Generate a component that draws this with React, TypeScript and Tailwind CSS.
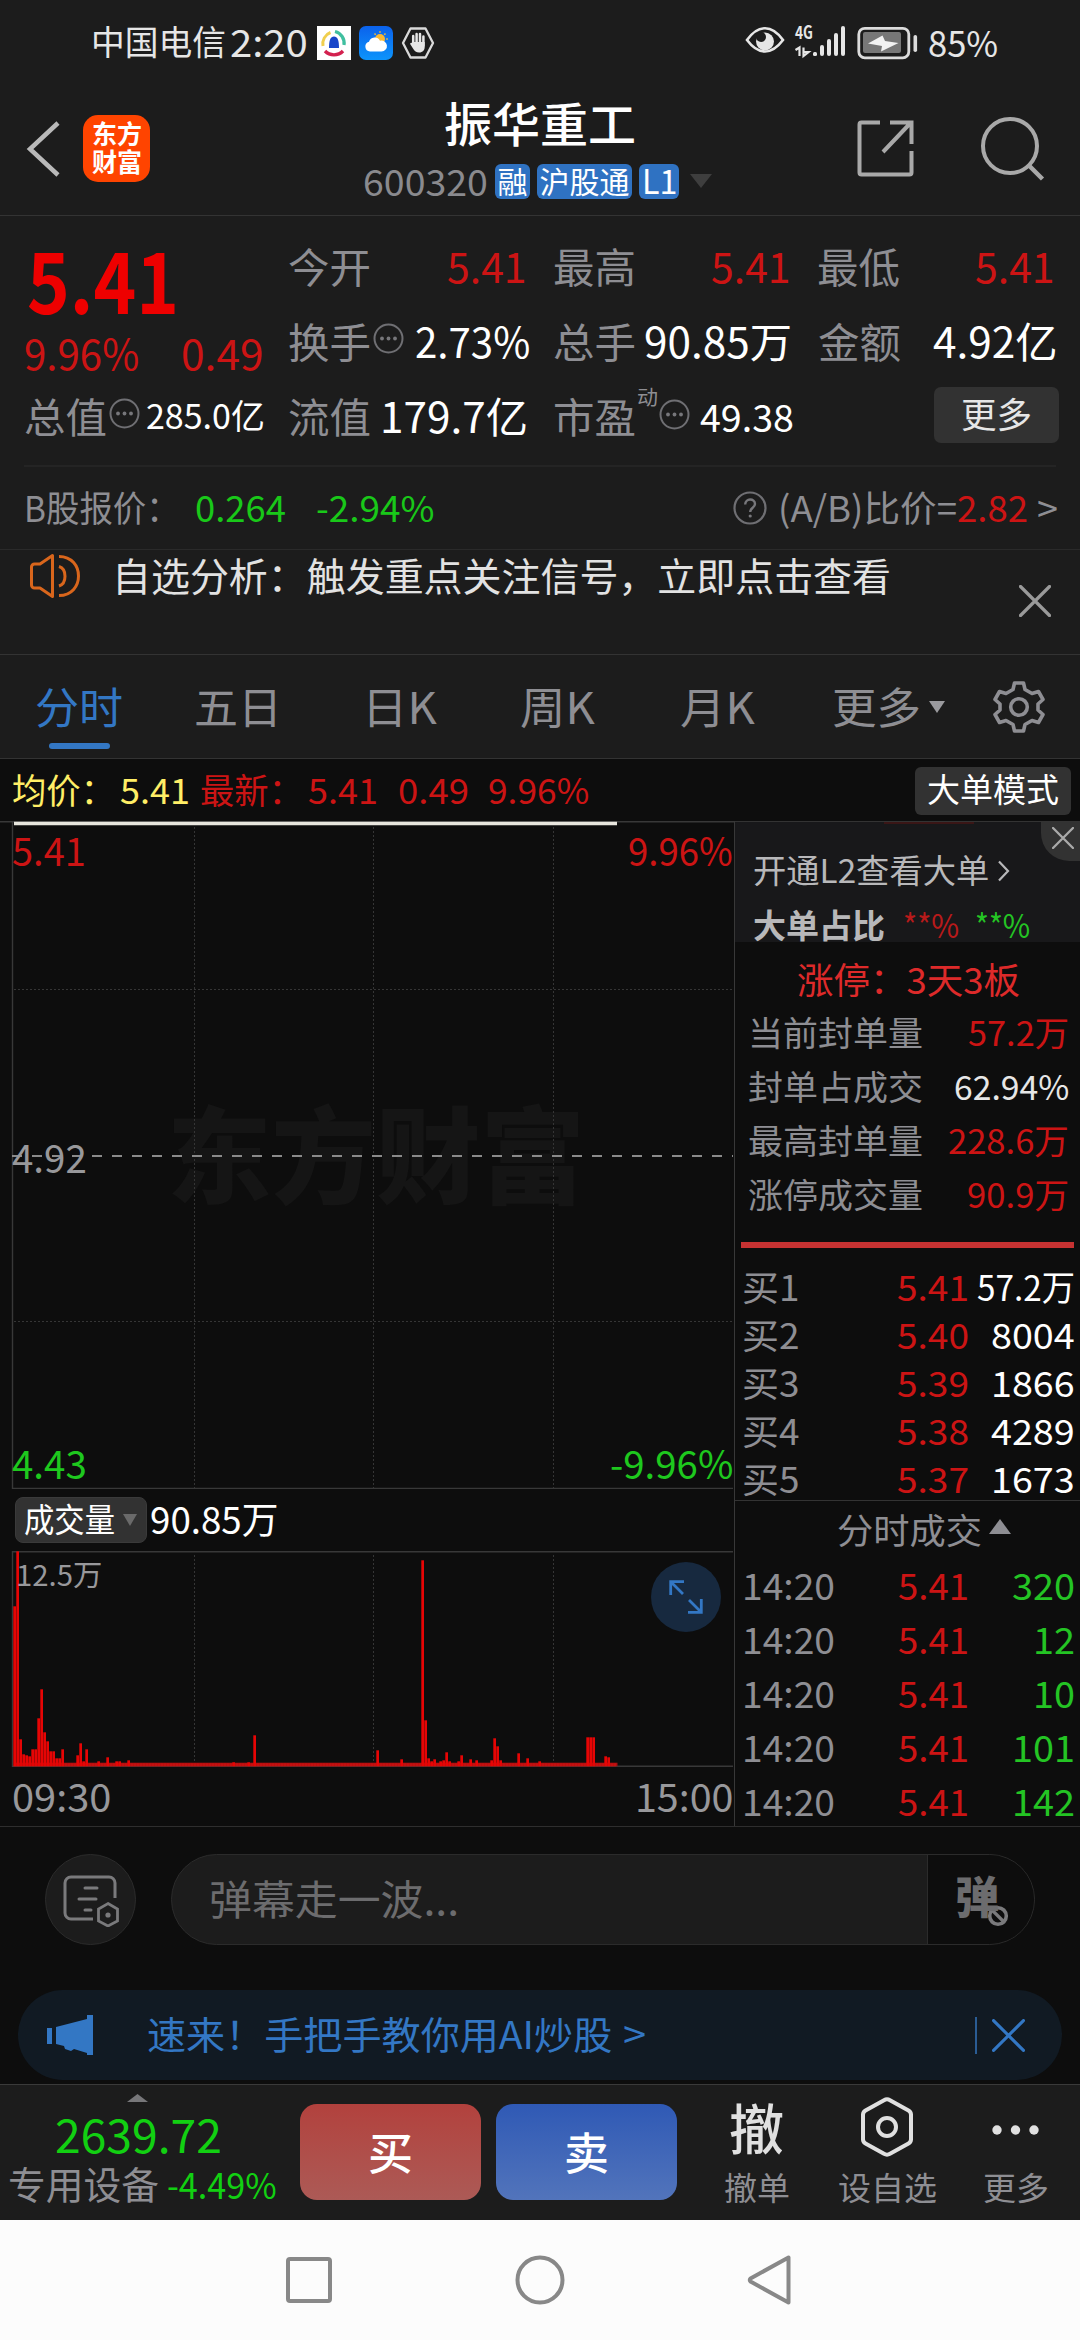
import React, { useLayoutEffect, useRef } from "react";

/* Text that is stretched or condensed to the width of its own box. */
function Fit({ className = "", children }: { className?: string; children: React.ReactNode }) {
  const outer = useRef<HTMLSpanElement>(null);
  const inner = useRef<HTMLSpanElement>(null);
  useLayoutEffect(() => {
    if (outer.current && inner.current) {
      const scale = outer.current.clientWidth / inner.current.offsetWidth;
      inner.current.style.transform = `translateY(-6%) scaleX(${scale})`;
    }
  }, [children]);
  return (
    <span ref={outer} className={`block shrink-0 leading-none ${className}`}>
      <span ref={inner} className="inline-block origin-left whitespace-pre leading-none">
        {children}
      </span>
    </span>
  );
}

const Dots = ({ className = "" }: { className?: string }) => (
  <svg className={`shrink-0 ${className}`} width="31" height="31" viewBox="0 0 31 31" fill="none">
    <circle cx="15.5" cy="15.5" r="14" stroke="#6f6f73" strokeWidth="2" />
    <circle cx="9" cy="15.5" r="1.9" fill="#77777b" />
    <circle cx="15.5" cy="15.5" r="1.9" fill="#77777b" />
    <circle cx="22" cy="15.5" r="1.9" fill="#77777b" />
  </svg>
);

const Cross = ({ size, color, width, className = "" }: { size: number; color: string; width: number; className?: string }) => (
  <svg className={`shrink-0 ${className}`} width={size} height={size} viewBox="0 0 32 32" fill="none">
    <path d="M1.5 1.5 30.5 30.5M30.5 1.5 1.5 30.5" stroke={color} strokeWidth={width} strokeLinecap="round" />
  </svg>
);

function StatusBar() {
  return (
    <div className="flex h-[85px] items-center text-[#e6e6e6]">
      <Fit className="ml-[91px] w-[135px] text-[34px]">中国电信</Fit>
      <Fit className="ml-[4px] w-[78px] text-[38px]">2:20</Fit>
      <svg className="ml-[9px] shrink-0" width="34" height="34" viewBox="0 0 34 34" fill="none">
        <rect width="34" height="34" fill="#fff" />
        <path d="M6 20A12 12 0 0 1 13.500 6.500" stroke="#f0cf4e" strokeWidth="3" />
        <path d="M18 5.500A12 12 0 0 1 27 19" stroke="#3fbf9f" strokeWidth="3.200" />
        <path d="M8 25A12.500 12.500 0 0 0 26 25" stroke="#d3214f" strokeWidth="3.400" />
        <path d="M12 22C12 14 13.500 10.500 17 10.500S22 14 22 22Z" fill="#1746c9" />
      </svg>
      <svg className="ml-[8px] shrink-0" width="34" height="34" viewBox="0 0 34 34" fill="none">
        <defs>
          <linearGradient id="sky" x1="0" y1="0" x2="0" y2="1">
            <stop offset="0" stopColor="#0b62ec" />
            <stop offset="1" stopColor="#0d94fb" />
          </linearGradient>
        </defs>
        <rect width="34" height="34" rx="7" fill="url(#sky)" />
        <circle cx="21" cy="13" r="5" fill="#f9b934" />
        <path d="M21 5.200v1.600M26.500 7.500l-1.200 1.200M28.800 13h-1.600M26.500 18.500l-1.200-1.200M15.500 7.500l1.200 1.200" stroke="#f9b934" strokeWidth="1.500" />
        <path d="M11 25.500a5 5 0 0 1-1-9.800 6 6 0 0 1 11-1 5.500 5.500 0 1 1 1.500 10.800Z" fill="#fff" />
      </svg>
      <svg className="ml-[8px] shrink-0" width="34" height="34" viewBox="0 0 34 34" fill="none">
        <path d="M9.500 2.500h15L32 17l-7.500 14.500h-15L2 17Z" stroke="#d9d9d9" strokeWidth="2.300" strokeLinejoin="round" />
        <path d="M12.200 10v8M15.600 8v9M19 8v9M22.400 10.500v9" stroke="#e6e6e6" strokeWidth="2.500" strokeLinecap="round" />
        <path d="M11 16h12.700v5c0 3-2 5.500-5.500 5.500-3 0-4.700-1.500-6.200-4l-3-4.700c.8-1.300 2-1.200 3 0Z" fill="#e6e6e6" />
      </svg>
      <svg className="ml-[310px] mt-[-5px] shrink-0" width="40" height="28" viewBox="0 0 40 28" fill="none">
        <path d="M2 14C8 5.500 13.500 2.200 20 2.200S32 5.500 38 14C32 22 26.500 25.500 20 25.500S8 22 2 14Z" stroke="#e6e6e6" strokeWidth="2.600" />
        <circle cx="20" cy="15.500" r="9" fill="#e6e6e6" />
        <circle cx="16" cy="11" r="5" fill="#1c1c1c" />
      </svg>
      <svg className="ml-[10px] mt-[-4px] shrink-0 overflow-visible" width="52" height="34" viewBox="0 0 52 34" fill="#e6e6e6">
        <path d="M.5 26 4.500 23.500V32M8.500 23.500V32l5-4h-5" stroke="#e6e6e6" strokeWidth="2.200" fill="none" />
        <text x="0" y="15" fontSize="18" fontWeight="700" textLength="18" lengthAdjust="spacingAndGlyphs" fontFamily="Noto Sans CJK SC, sans-serif">4G</text>
        <rect x="18" y="28" width="4" height="4" rx="1.500" />
        <rect x="25" y="21" width="4" height="11" rx="2" />
        <rect x="32" y="15" width="4" height="17" rx="2" />
        <rect x="39" y="9" width="4" height="23" rx="2" />
        <rect x="46" y="2" width="4" height="30" rx="2" />
      </svg>
      <svg className="ml-[10px] shrink-0" width="61" height="34" viewBox="0 0 61 34" fill="none">
        <rect x="1.800" y="2.300" width="50" height="29.500" rx="6" stroke="#dcdcdc" strokeWidth="2.800" />
        <rect x="6" y="6" width="38" height="21" rx="2" fill="#777" />
        <path d="M25.500 9.500 11 17.500l14 2.500-1 5.500L41.500 17 28 15Z" fill="#f2f2f2" />
        <rect x="56.500" y="9" width="3.600" height="17" rx="1.800" fill="#dcdcdc" />
      </svg>
      <Fit className="ml-[10px] w-[70px] text-[36px]">85%</Fit>
    </div>
  );
}

function Header() {
  return (
    <div className="flex h-[131px] border-b-[1.500px] border-[#333] pt-[5px]">
      <svg className="ml-[24px] mt-[30px] shrink-0" width="38" height="58" viewBox="0 0 38 58" fill="none">
        <path d="M34 3 6 29 34 55" stroke="#b9b9b9" strokeWidth="4.500" />
      </svg>
      <div className="ml-[21px] mt-[25px] flex h-[67px] w-[67px] shrink-0 flex-col items-center justify-center gap-[2px] rounded-[15px] bg-[#ff4400] text-[26px] font-bold text-white">
        <Fit className="w-[50px]">东方</Fit>
        <Fit className="w-[50px]">财富</Fit>
      </div>
      <div className="ml-[213px] w-[350px] pt-[11px]">
        <Fit className="ml-[81px] w-[192px] text-[47px] font-medium text-white">振华重工</Fit>
        <div className="mt-[16px] flex h-[35px] items-center text-[36px]">
          <Fit className="w-[125px] text-[#8a8a8e]">600320</Fit>
          <span className="ml-[7px] flex h-[35px] w-[35px] items-center justify-center rounded-[6px] bg-[#2f72c2] text-[30px] text-white"><Fit className="w-[30px]">融</Fit></span>
          <span className="ml-[7px] flex h-[35px] w-[95px] items-center justify-center rounded-[6px] bg-[#2f72c2] text-[30px] text-white"><Fit className="w-[90px]">沪股通</Fit></span>
          <span className="ml-[7px] flex h-[35px] w-[40px] items-center justify-center rounded-[6px] bg-[#2f72c2] text-[34px] text-white"><Fit className="w-[35px]">L1</Fit></span>
          <svg className="ml-[11px] mt-[-2px] shrink-0" width="22" height="14" viewBox="0 0 22 14"><path d="M0 0h22L11 14Z" fill="#3e3e3e" /></svg>
        </div>
      </div>
      <svg className="ml-[141px] mt-[27px] shrink-0" width="64" height="64" viewBox="0 0 64 64" fill="none">
        <path d="M26 5.500H7.500a2 2 0 0 0-2 2v48a2 2 0 0 0 2 2h48a2 2 0 0 0 2-2V34M29 35 56.500 6M36 5.500h21.500V27" stroke="#a9a9a9" strokeWidth="4" />
      </svg>
      <svg className="ml-[62px] mt-[26px] shrink-0" width="66" height="68" viewBox="0 0 66 68" fill="none">
        <circle cx="30" cy="30" r="27" stroke="#a9a9a9" strokeWidth="4" />
        <path d="M49 49.500 62.500 63" stroke="#a9a9a9" strokeWidth="4.500" />
      </svg>
    </div>
  );
}

const Label = ({ children }: { children: React.ReactNode }) => <Fit className="w-[83px] text-[41px] text-[#8e8e93]">{children}</Fit>;

function Quote() {
  return (
    <div className="mx-[24px] flex h-[251px] border-b-2 border-[#242424] text-[42px]">
      <div className="w-[264px] shrink-0 pt-[28px]">
        <div className="flex h-[74px] items-center">
          <Fit className="ml-[3px] w-[152px] text-[85px] font-bold text-[#ee0000]">5.41</Fit>
        </div>
        <div className="flex h-[74px] items-center text-[#cc1414]">
          <Fit className="w-[115px]">9.96%</Fit>
          <Fit className="ml-[42px] w-[83px]">0.49</Fit>
        </div>
        <div className="flex h-[50px] items-center">
          <Label>总值</Label>
          <Dots className="-mt-[7px] ml-[2px]" />
          <Fit className="ml-[6px] w-[119px] text-[34px] text-white">285.0亿</Fit>
        </div>
      </div>
      <div className="flex-1 pt-[14px]">
        <div className="flex h-[75px] items-center text-[#cc1414]">
          <Label>今开</Label>
          <Fit className="ml-[76px] w-[80px]">5.41</Fit>
          <span className="w-[26px]" />
          <Label>最高</Label>
          <Fit className="ml-[75px] w-[80px]">5.41</Fit>
          <span className="w-[26px]" />
          <Label>最低</Label>
          <Fit className="ml-[75px] w-[80px]">5.41</Fit>
        </div>
        <div className="flex h-[75px] items-center text-white">
          <Label>换手</Label>
          <Dots className="-mt-[9px] ml-[2px]" />
          <Fit className="ml-[11px] w-[115px]">2.73%</Fit>
          <span className="w-[23px]" />
          <Label>总手</Label>
          <Fit className="ml-[8px] w-[148px]">90.85万</Fit>
          <span className="w-[26px]" />
          <Label>金额</Label>
          <Fit className="ml-[32px] w-[125px]">4.92亿</Fit>
        </div>
        <div className="flex h-[75px] items-center text-white">
          <Label>流值</Label>
          <Fit className="ml-[9px] w-[148px]">179.7亿</Fit>
          <span className="w-[25px]" />
          <Label>市盈</Label>
          <Fit className="-mt-[40px] ml-px w-[21px] text-[20px] text-[#8e8e93]">动</Fit>
          <Dots className="-mt-[7px] ml-px" />
          <Fit className="ml-[10px] w-[94px] text-[38px]">49.38</Fit>
          <span className="-mt-[6px] ml-[140px] flex h-[56px] w-[125px] items-center justify-center rounded-[7px] bg-[#323232] text-[#e6e6e6]">
            <Fit className="w-[71px] text-[35px]">更多</Fit>
          </span>
        </div>
      </div>
    </div>
  );
}

function BShare() {
  return (
    <div className="flex h-[83px] items-center border-b-[1.500px] border-[#2a2a2a] text-[36px] text-[#8e8e93]">
      <Fit className="ml-[24px] w-[156px]">B股报价：</Fit>
      <Fit className="ml-[15px] w-[91px] text-[#19c819]">0.264</Fit>
      <Fit className="ml-[30px] w-[119px] text-[#19c819]">-2.94%</Fit>
      <svg className="ml-[298px] shrink-0" width="34" height="34" viewBox="0 0 34 34" fill="none">
        <circle cx="17" cy="17" r="15.500" stroke="#6f6f73" strokeWidth="2.200" />
        <path d="M12.200 13.500c0-6.500 9.800-6.500 9.800-.5 0 4-4.800 3.500-4.800 8" stroke="#77777b" strokeWidth="2.400" />
        <circle cx="17.200" cy="25" r="1.600" fill="#77777b" />
      </svg>
      <Fit className="ml-[11px] w-[179px]">(A/B)比价=</Fit>
      <Fit className="w-[71px] text-[#cc1414]">2.82</Fit>
      <Fit className="ml-[9px] w-[21px]">&gt;</Fit>
    </div>
  );
}

function Notice() {
  return (
    <div className="flex h-[105px] border-b-[1.500px] border-[#333]">
      <svg className="ml-[28px] mt-[3px] shrink-0" width="54" height="46" viewBox="0 0 54 46" fill="none" stroke="#d9661c" strokeWidth="3">
        <path d="M24.500 2.500v41L12 35H6.500a3 3 0 0 1-3-3V14a3 3 0 0 1 3-3H12Z" strokeLinejoin="round" />
        <path d="M31 13.500c8 2.500 8 17 0 19.500M31 3.500c26 0 26 39 0 39" />
      </svg>
      <Fit className="ml-[30px] mt-[7px] w-[779px] text-[38.500px] text-[#e2e2e2]">自选分析：触发重点关注信号，立即点击查看</Fit>
      <Cross size={32} color="#9a9a9a" width={3.2} className="ml-[128px] mt-[35px]" />
    </div>
  );
}

function Tabs() {
  return (
    <div className="flex h-[104px] items-center border-b-[1.500px] border-[#333] pt-[4px] text-[43px] text-[#8e8e93]">
      <div className="relative ml-[35px] text-[#3377c4]">
        <Fit className="w-[88px]">分时</Fit>
        <span className="absolute left-[14px] top-[56px] h-[6px] w-[61px] rounded-full bg-[#3377c4]" />
      </div>
      <Fit className="ml-[71px] w-[88px]">五日</Fit>
      <Fit className="ml-[80px] w-[75px]">日K</Fit>
      <Fit className="ml-[83px] w-[75px]">周K</Fit>
      <Fit className="ml-[85px] w-[75px]">月K</Fit>
      <Fit className="ml-[77px] w-[89px]">更多</Fit>
      <svg className="ml-[8px] mt-[-4px] shrink-0" width="16" height="12" viewBox="0 0 16 12"><path d="M0 0h16L8 12Z" fill="#9a9a9e" /></svg>
      <svg className="ml-[47px] mt-[-4px] shrink-0" width="54" height="54" viewBox="0 0 54 54" fill="none" stroke="#8e8e93" strokeWidth="3.600" strokeLinejoin="round">
        <path d="M22.500 3h9l1.500 6.500 7 4 6.500-2 4.500 8-5 4.500v6l5 4.500-4.500 8-6.500-2-7 4L31.500 51h-9L21 44.500l-7-4-6.500 2-4.500-8L8 30v-6l-5-4.500 4.500-8 6.500 2 7-4Z" />
        <circle cx="27" cy="27" r="8.300" />
      </svg>
    </div>
  );
}

function InfoRow() {
  return (
    <div className="flex h-[62px] items-center pt-px text-[35px] text-[#cc1414]">
      <Fit className="ml-[12px] w-[103px] text-[#ffee66]">均价：</Fit>
      <Fit className="ml-[5px] w-[70px] text-[#ffee66]">5.41</Fit>
      <Fit className="ml-[10px] w-[103px]">最新：</Fit>
      <Fit className="ml-[5px] w-[70px]">5.41</Fit>
      <Fit className="ml-[20px] w-[71px]">0.49</Fit>
      <Fit className="ml-[19px] w-[101px]">9.96%</Fit>
      <span className="ml-[326px] flex h-[48px] w-[156px] items-center justify-center rounded-[6px] bg-[#323232] text-white">
        <Fit className="w-[132px] text-[33px]">大单模式</Fit>
      </span>
    </div>
  );
}

const GRID_X = [194.5, 373.5, 553.5];

function PriceChart() {
  return (
    <div className="relative h-[668px]">
      <svg className="block" width="734" height="668" viewBox="0 0 734 668" fill="none">
        <text x="167" y="374" fontSize="105" fontWeight="900" fill="#151515" textLength="418" lengthAdjust="spacingAndGlyphs" fontFamily="Noto Sans CJK SC, sans-serif">东方财富</text>
        <path d="M12.500 0V667.500H733" stroke="#383838" strokeWidth="1.400" />
        <path d="M0 .7H734" stroke="#383838" strokeWidth="1.400" />
        {GRID_X.map((x) => <path key={x} d={`M${x} 6V667`} stroke="#353535" strokeDasharray="2 2" />)}
        <path d="M14 168.500H733M14 500.500H733" stroke="#353535" strokeDasharray="2 2" />
        <path d="M12 335H733" stroke="#8a8a8a" strokeWidth="2" strokeDasharray="10 10" />
        <path d="M14 2.500H617" stroke="#e8e6de" strokeWidth="3.500" />
      </svg>
      <div className="absolute inset-0 flex flex-col justify-between pb-[5px] pl-[12px] pr-px pt-[11px] text-[39px]">
        <div className="flex justify-between text-[#cc1414]"><Fit className="w-[74px]">5.41</Fit><Fit className="w-[105px]">9.96%</Fit></div>
        <div className="flex text-[#98989b]"><Fit className="w-[75px]">4.92</Fit></div>
        <div className="flex justify-between text-[#1ec81e]"><Fit className="w-[75px]">4.43</Fit><Fit className="w-[123px]">-9.96%</Fit></div>
      </div>
    </div>
  );
}

/* Minute index and bar height; every other minute is at the floor. */
const VOLUME: Record<number, number> = {
  0: 160, 1: 215, 2: 27, 3: 12, 4: 11, 5: 10, 6: 17, 7: 17, 8: 48, 9: 77, 10: 34, 11: 25, 12: 15, 13: 15, 14: 8, 15: 8, 16: 17,
  21: 11, 22: 23, 23: 5, 24: 17, 28: 5, 31: 9, 34: 5, 35: 5, 38: 6, 73: 4, 78: 4, 80: 31, 121: 16, 129: 7, 136: 206, 137: 46,
  138: 8, 139: 5, 140: 7, 142: 5, 143: 6, 144: 14, 145: 5, 148: 5, 149: 11, 152: 7, 154: 6, 159: 6, 160: 28, 161: 20, 162: 6,
  168: 13, 171: 8, 175: 5, 191: 29, 192: 29, 193: 29, 197: 10, 198: 9,
};

function VolumeChart() {
  return (
    <>
      <div className="flex h-[62px] items-center text-white">
        <span className="ml-[15px] flex h-[46px] w-[132px] items-center rounded-[8px] border border-[#3a3a3a] bg-[#323232]">
          <Fit className="ml-[8px] w-[91px] text-[33px]">成交量</Fit>
          <svg className="ml-[8px] shrink-0" width="14" height="12" viewBox="0 0 14 12"><path d="M0 0h14L7 12Z" fill="#6a6a6a" /></svg>
        </span>
        <Fit className="ml-[3px] w-[128px] text-[37px]">90.85万</Fit>
      </div>
      <div className="relative h-[216px]">
        <svg className="block" width="734" height="216" viewBox="0 0 734 216" fill="none">
          <path d="M733 .7H12.500V215.300H733" stroke="#383838" strokeWidth="1.400" />
          {GRID_X.map((x) => <path key={x} d={`M${x} 4V215`} stroke="#353535" strokeDasharray="2 2" />)}
          <rect x="14" y="211.700" width="603.500" height="3.600" fill="#a80f0f" />
          {Array.from({ length: 201 }, (_, i) => {
            const h = VOLUME[i] ?? 3;
            return <rect key={i} x={13.3 + i * 3} y={215.3 - h} width="2.700" height={h} fill={h > 3 ? "#e60505" : "#c41010"} />;
          })}
        </svg>
        <div className="absolute inset-0 flex items-start justify-between pl-[16px] pr-[13px] pt-[11px]">
          <Fit className="mt-[-1px] w-[86px] text-[29px] text-[#98989b]">12.5万</Fit>
          <span className="flex h-[70px] w-[70px] items-center justify-center rounded-full bg-[#17293f]">
            <svg width="34" height="34" viewBox="0 0 34 34" fill="none" stroke="#3377c4" strokeWidth="2.800">
              <path d="M15 1.700H1.700V15M2 2 14 14M19 32.300H32.300V19M32 32 20 20" />
            </svg>
          </span>
        </div>
      </div>
      <div className="flex h-[60px] items-center justify-between pl-[12px] pr-px text-[39px] text-[#98989b]">
        <Fit className="w-[99px]">09:30</Fit>
        <Fit className="w-[98px]">15:00</Fit>
      </div>
    </>
  );
}

const bids = [["买1", "5.41", "57.2万"], ["买2", "5.40", "8004"], ["买3", "5.39", "1866"], ["买4", "5.38", "4289"], ["买5", "5.37", "1673"]];
const trades = ["320", "12", "10", "101", "142"];
const limitRows = [
  ["当前封单量", "57.2万", "w-[101px] text-[#cc1414]"],
  ["封单占成交", "62.94%", "w-[115px] text-[#e6e6e6]"],
  ["最高封单量", "228.6万", "w-[121px] text-[#cc1414]"],
  ["涨停成交量", "90.9万", "w-[102px] text-[#cc1414]"],
];
const digitWidth: Record<number, string> = { 2: "w-[42px]", 3: "w-[63px]", 4: "w-[84px]", 5: "w-[98px]" };

function SidePanel() {
  return (
    <div className="w-[346px] border-l-[1.500px] border-[#383838]">
      <div className="relative h-[121px] border-t-[1.500px] border-[#333] bg-[#18181a] pt-[32px] text-[33px] text-[#b8b8ba]">
        <span className="absolute left-[149px] top-0 h-[2px] w-[90px] bg-[#3a1616]" />
        <div className="flex h-[34px] items-center">
          <Fit className="ml-[18px] w-[236px]">开通L2查看大单</Fit>
          <svg className="ml-[8px] shrink-0" width="13" height="22" viewBox="0 0 13 22" fill="none"><path d="M2 1.500 11 11 2 20.500" stroke="#b8b8ba" strokeWidth="2.200" /></svg>
        </div>
        <div className="mt-[21px] flex h-[34px] items-center">
          <Fit className="ml-[18px] w-[132px] font-bold">大单占比</Fit>
          <Fit className="ml-[18px] w-[56px] text-[#b81a1a]">**%</Fit>
          <Fit className="ml-[16px] w-[55px] text-[#24c424]">**%</Fit>
        </div>
        <span className="absolute right-0 top-0 flex h-[39px] w-[39px] items-center justify-center rounded-bl-[28px] bg-[#323232] pb-[7px] pl-[5px]">
          <Cross size={22} color="#a9a9a9" width={3.4} />
        </span>
      </div>
      <div className="flex h-[65px] items-center pt-[11px]">
        <Fit className="ml-[62px] w-[223px] text-[36px] text-[#dd2a2a]">涨停：3天3板</Fit>
      </div>
      {limitRows.map(([name, value, style]) => (
        <div key={name} className="flex h-[54px] items-center justify-between pl-[13px] pr-[11px] text-[34px] text-[#8e8e93]">
          <Fit className="w-[175px]">{name}</Fit>
          <Fit className={style}>{value}</Fit>
        </div>
      ))}
      <div className="ml-[6px] mt-[19px] h-[6px] w-[333px] bg-[#c63232]" />
      <div className="mt-[15px]">
        {bids.map(([name, price, vol]) => (
          <div key={name} className="flex h-[48px] items-center text-[35px] text-[#8e8e93]">
            <Fit className="ml-[7px] w-[57px]">{name}</Fit>
            <Fit className="ml-[98px] w-[72px] text-[#cc1414]">{price}</Fit>
            <span className="flex flex-1 justify-end pr-[5px] text-white"><Fit className={digitWidth[vol.length]}>{vol}</Fit></span>
          </div>
        ))}
      </div>
      <div className="mt-[-3px] flex h-[59px] items-center border-t-[1.500px] border-[#333]">
        <Fit className="ml-[102px] w-[145px] text-[35px] text-[#8e8e93]">分时成交</Fit>
        <svg className="ml-[7px] mt-[-8px] shrink-0" width="22" height="15" viewBox="0 0 22 15"><path d="M11 0 22 15H0Z" fill="#8e8e93" /></svg>
      </div>
      {trades.map((vol) => (
        <div key={vol} className="flex h-[54px] items-center text-[36px] text-[#8e8e93]">
          <Fit className="ml-[7px] w-[93px]">14:20</Fit>
          <Fit className="ml-[63px] w-[71px] text-[#cc1414]">5.41</Fit>
          <span className="flex flex-1 justify-end pr-[5px] text-[#24c424]"><Fit className={digitWidth[vol.length]}>{vol}</Fit></span>
        </div>
      ))}
    </div>
  );
}

function Danmu() {
  return (
    <div className="flex h-[164px] border-t-[1.500px] border-[#2e2e2e] pt-[27px] text-[#6c6c6e]">
      <span className="ml-[45px] flex h-[91px] w-[91px] shrink-0 items-center justify-center rounded-full border-[1.500px] border-[#2b2b2b] bg-[#1c1c1c]">
        <svg width="58" height="54" viewBox="0 0 58 54" fill="none" stroke="#7a7a7c" strokeWidth="3">
          <path d="M31 46H9a6 6 0 0 1-6-6V10a6 6 0 0 1 6-6h38a6 6 0 0 1 6 6v15" />
          <path d="M23 15h12M17 26h17M23 37h6" strokeLinecap="round" />
          <path d="M46 30.500 55.500 36v12L46 53l-9.500-5V36Z" strokeWidth="2.800" />
          <circle cx="46" cy="42" r="2.600" fill="#7a7a7c" stroke="none" />
        </svg>
      </span>
      <div className="ml-[35px] flex h-[91px] w-[864px] shrink-0 items-center overflow-hidden rounded-full border-[1.500px] border-[#2b2b2b] bg-[#1c1c1c]">
        <Fit className="ml-[37px] w-[250px] text-[41px]">弹幕走一波...</Fit>
        <span className="ml-auto flex h-full w-[107px] items-center border-l-[1.500px] border-[#2b2b2b] bg-[#0d0d0d]">
          <Fit className="-mt-[4px] ml-[27px] w-[44px] text-[44px] font-black">弹</Fit>
          <svg className="-ml-[13px] mt-[33px] shrink-0" width="24" height="24" viewBox="0 0 24 24" fill="none">
            <circle cx="12" cy="12" r="12" fill="#0d0d0d" />
            <circle cx="12" cy="12" r="8.300" stroke="#7a7a7c" strokeWidth="3.600" />
            <path d="M6.500 6.500 17.500 17.500" stroke="#7a7a7c" strokeWidth="3.200" />
          </svg>
        </span>
      </div>
    </div>
  );
}

function Banner() {
  return (
    <div className="ml-[18px] flex h-[90px] w-[1044px] items-center rounded-full bg-[#111a23] text-[#3377c4]">
      <svg className="ml-[29px] shrink-0" width="46" height="40" viewBox="0 0 46 40" fill="#3377c4">
        <path d="M0 13h5v16H0ZM9 12 40 4V0h6v40h-6v-2l-13-4-3 2-6-2-1-3-8-2Z" />
      </svg>
      <Fit className="ml-[54px] w-[465px] text-[38px]">速来！手把手教你用AI炒股</Fit>
      <Fit className="ml-[11px] w-[23px] text-[38px]">&gt;</Fit>
      <span className="ml-[329px] h-[37px] w-[1.500px] bg-[#2a5c94]" />
      <Cross size={33} color="#3377c4" width={3} className="ml-[15px]" />
    </div>
  );
}

function ActionBar() {
  return (
    <div className="mt-[4px] flex h-[136px] border-t-[1.500px] border-[#3a3a3a] bg-[#1c1c1c]">
      <div className="w-[300px] shrink-0 pt-[9px]">
        <svg className="ml-[127px] block" width="21" height="8" viewBox="0 0 21 8"><path d="M10.500 0 21 8H0Z" fill="#77777a" /></svg>
        <Fit className="ml-[55px] mt-[11px] h-[46px] w-[167px] text-[46px] text-[#12d012]">2639.72</Fit>
        <div className="mt-[7px] flex items-center">
          <Fit className="ml-[8px] w-[151px] text-[38px] text-[#8e8e93]">专用设备</Fit>
          <Fit className="ml-[8px] w-[110px] text-[36px] text-[#12d012]">-4.49%</Fit>
        </div>
      </div>
      <div className="mt-[19px] flex h-[96px] w-[181px] shrink-0 items-center justify-center rounded-[17px] bg-linear-to-b from-[#b2413d] to-[#ac5a56] pt-[4px] text-[44px] font-medium text-white"><Fit className="w-[45px]">买</Fit></div>
      <div className="ml-[15px] mt-[19px] flex h-[96px] w-[181px] shrink-0 items-center justify-center rounded-[17px] bg-linear-to-b from-[#2f59b5] to-[#5274bb] pt-[4px] text-[44px] font-medium text-white"><Fit className="w-[45px]">卖</Fit></div>
      <div className="ml-[47px] pt-[18px] text-[#e0e0e0]">
        <Fit className="ml-[5px] w-[55px] text-[54px] font-medium">撤</Fit>
        <Fit className="mt-[15px] w-[66px] text-[32px] text-[#8e8e93]">撤单</Fit>
      </div>
      <div className="ml-[48px] pt-[12px]">
        <svg className="ml-[22px] block" width="54" height="60" viewBox="0 0 54 60" fill="none" stroke="#e0e0e0" strokeWidth="4">
          <path d="M24 3.200a6 6 0 0 1 6 0L48.500 13.500a5 5 0 0 1 2.500 4v25a5 5 0 0 1-2.500 4L30 56.800a6 6 0 0 1-6 0L5.500 46.500a5 5 0 0 1-2.500-4v-25a5 5 0 0 1 2.500-4Z" />
          <circle cx="27" cy="30" r="9" />
        </svg>
        <Fit className="mt-[15px] w-[99px] text-[32px] text-[#8e8e93]">设自选</Fit>
      </div>
      <div className="ml-[46px] pt-[40px]">
        <svg className="ml-[9px] block" width="48" height="10" viewBox="0 0 48 10" fill="#e0e0e0">
          <circle cx="5" cy="5" r="4.700" /><circle cx="23.500" cy="5" r="4.700" /><circle cx="42" cy="5" r="4.700" />
        </svg>
        <Fit className="mt-[37px] w-[66px] text-[32px] text-[#8e8e93]">更多</Fit>
      </div>
    </div>
  );
}

function NavBar() {
  return (
    <div className="flex h-[120px] items-center bg-[#fcfcfc]">
      <svg className="ml-[285px] shrink-0" width="48" height="48" viewBox="0 0 48 48" fill="none"><rect x="3" y="3" width="42" height="42" rx="2" stroke="#888" strokeWidth="4" /></svg>
      <svg className="ml-[181px] shrink-0" width="52" height="52" viewBox="0 0 52 52" fill="none"><circle cx="26" cy="26" r="22.500" stroke="#888" strokeWidth="4" /></svg>
      <svg className="ml-[180px] shrink-0" width="48" height="52" viewBox="0 0 48 52" fill="none"><path d="M42.500 3.500v45L4.500 27.500q-1.500-1.500 0-3Z" stroke="#888" strokeWidth="4" strokeLinejoin="round" /></svg>
    </div>
  );
}

export default function App() {
  return (
    <div className="h-[2340px] w-[1080px] overflow-hidden bg-[#0d0d0d] font-['Noto_Sans_CJK_SC',sans-serif]">
      <div className="bg-[#1c1c1c]">
        <StatusBar />
        <Header />
        <Quote />
        <BShare />
        <Notice />
        <Tabs />
      </div>
      <InfoRow />
      <div className="flex h-[1005px]">
        <div className="w-[734px] shrink-0">
          <PriceChart />
          <VolumeChart />
        </div>
        <SidePanel />
      </div>
      <Danmu />
      <Banner />
      <ActionBar />
      <NavBar />
    </div>
  );
}
